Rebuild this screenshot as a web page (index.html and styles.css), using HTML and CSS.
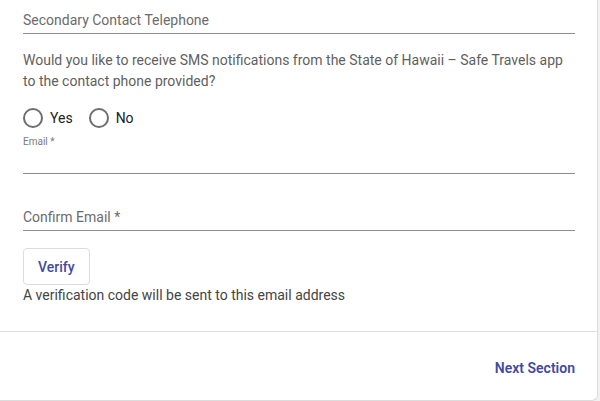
FILE: index.html
```html
<!DOCTYPE html>
<html lang="en">
<head>
<meta charset="utf-8">
<title>Contact</title>
<link rel="stylesheet" href="styles.css">
</head>
<body>
<div class="card">
  <div class="section">
    <div class="field">
      <div class="input placeholder">Secondary Contact Telephone</div>
    </div>
    <p class="question">Would you like to receive SMS notifications from the State of Hawaii – Safe Travels app to the contact phone provided?</p>
    <div class="radios">
      <label class="radio"><span class="circle"></span><span>Yes</span></label>
      <label class="radio"><span class="circle"></span><span>No</span></label>
    </div>
    <div class="field email">
      <div class="float-label">Email *</div>
      <div class="input"></div>
    </div>
    <div class="field confirm">
      <div class="input placeholder">Confirm Email *</div>
    </div>
    <button class="verify">Verify</button>
    <div class="helper">A verification code will be sent to this email address</div>
  </div>
  <div class="footer">
    <button class="next">Next Section</button>
  </div>
</div>
</body>
</html>
```
FILE: styles.css
```css
html, body {
  margin: 0;
  padding: 0;
  background: #f1f1f1;
  font-family: Roboto, "Liberation Sans", sans-serif;
}
.card {
  box-sizing: border-box;
  width: 599px;
  height: 401px;
  margin-left: -1px;
  background: #fff;
  border: 1px solid #dcdcdc;
  border-top: none;
  border-left: none;
  border-radius: 0 0 6px 0;
  display: flex;
  flex-direction: column;
}
.section {
  padding: 10px 22px 0 24px;
  height: 321px;
  border-bottom: 1px solid #dedede;
  display: flex;
  flex-direction: column;
  align-items: flex-start;
}
.field {
  align-self: stretch;
  border-bottom: 1px solid #8e8e8e;
}
.input {
  font-size: 14px;
  line-height: 20px;
  height: 20px;
  padding-bottom: 3px;
}
.placeholder {
  color: #6b6b6b;
}
.question {
  margin: 16px 0 0;
  font-size: 14px;
  line-height: 21px;
  color: #5f5f5f;
}
.radios {
  display: flex;
  gap: 16px;
  margin-top: 16px;
}
.radio {
  display: flex;
  align-items: center;
  gap: 7px;
  font-size: 14px;
  line-height: 20px;
  color: #202124;
  font-weight: 400;
}
.circle {
  box-sizing: border-box;
  width: 20px;
  height: 20px;
  border: 2px solid #6e6e6e;
  border-radius: 50%;
}
.email {
  margin-top: 8px;
}
.float-label {
  font-size: 10px;
  line-height: 12px;
  color: #7a7a7a;
}
.email .input {
  height: 22px;
}
.confirm {
  margin-top: 33px;
}
.verify {
  margin-top: 17px;
  height: 37px;
  padding: 0 14px;
  background: #fff;
  border: 1px solid #dadce0;
  border-radius: 4px;
  font-family: inherit;
  font-size: 14px;
  font-weight: 500;
  color: #3f4b9f;
}
.helper {
  font-size: 14px;
  line-height: 20px;
  color: #444;
}
.footer {
  display: flex;
  justify-content: flex-end;
  padding: 26px 22px 0 0;
}
.next {
  background: none;
  border: none;
  padding: 0;
  font-family: inherit;
  font-size: 14px;
  font-weight: 600;
  line-height: 20px;
  color: #3f4b9f;
}
```
